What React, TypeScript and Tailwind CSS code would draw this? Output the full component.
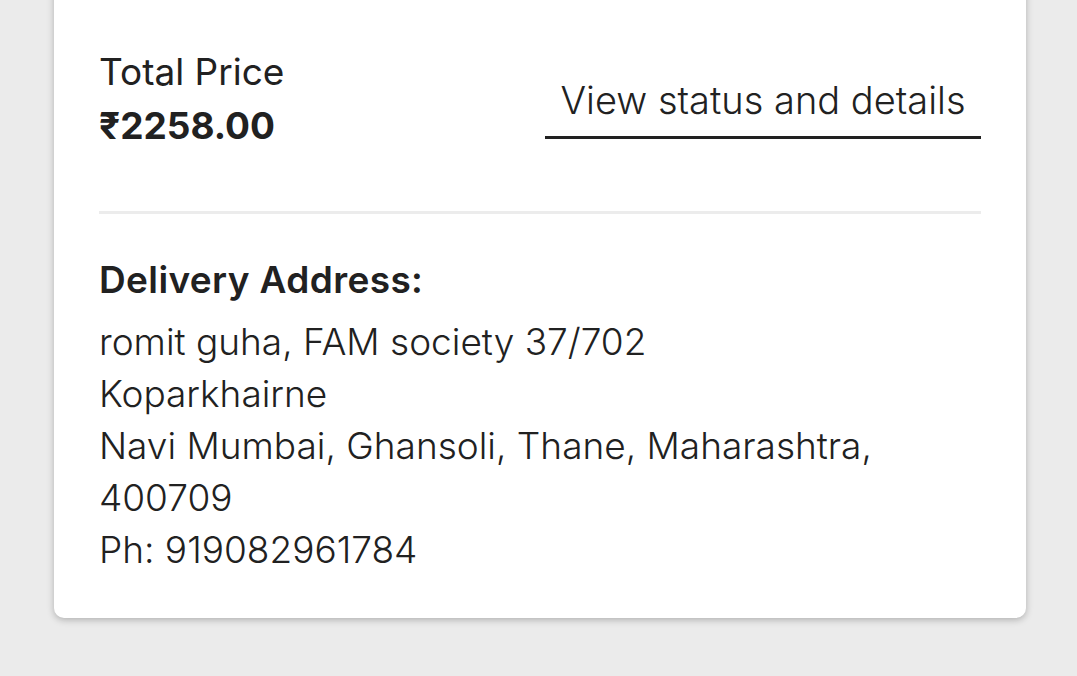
export default function App() {
  return (
    <div
      className="min-h-screen w-full overflow-hidden bg-[#ebebeb] pl-[54px] pr-[51px] pb-[59px]"
      style={{ fontFamily: "Inter, 'Noto Sans', sans-serif" }}
    >
      <div className="-mt-[20px] rounded-[10px] bg-white px-[45px] pt-[20px] shadow-[0_2px_7px_rgba(0,0,0,0.25)]">
        <div className="flex items-start justify-between pt-[45px] pb-[58px]">
          <div className="text-[#212121]">
            <div className="text-[37px] leading-[54px]">Total Price</div>
            <div className="text-[37px] font-bold leading-[54px]">₹2258.00</div>
          </div>
          <button className="mt-[33px] w-[436px] border-b-[3px] border-[#212121] pb-[14px] text-center text-[38px] font-light leading-[44px] text-[#212121]">
            View status and details
          </button>
        </div>
        <div className="h-[3px] bg-[#ececec]" />
        <div className="pt-[40px] pb-[42px] text-[37px] leading-[52px] text-[#212121]">
          <div className="font-semibold tracking-[0.01em]">Delivery Address:</div>
          <div className="mt-[10px] font-light">
            <div>romit guha, FAM society 37/702</div>
            <div>Koparkhairne</div>
            <div>Navi Mumbai, Ghansoli, Thane, Maharashtra,</div>
            <div>400709</div>
            <div>Ph: 919082961784</div>
          </div>
        </div>
      </div>
    </div>
  );
}
